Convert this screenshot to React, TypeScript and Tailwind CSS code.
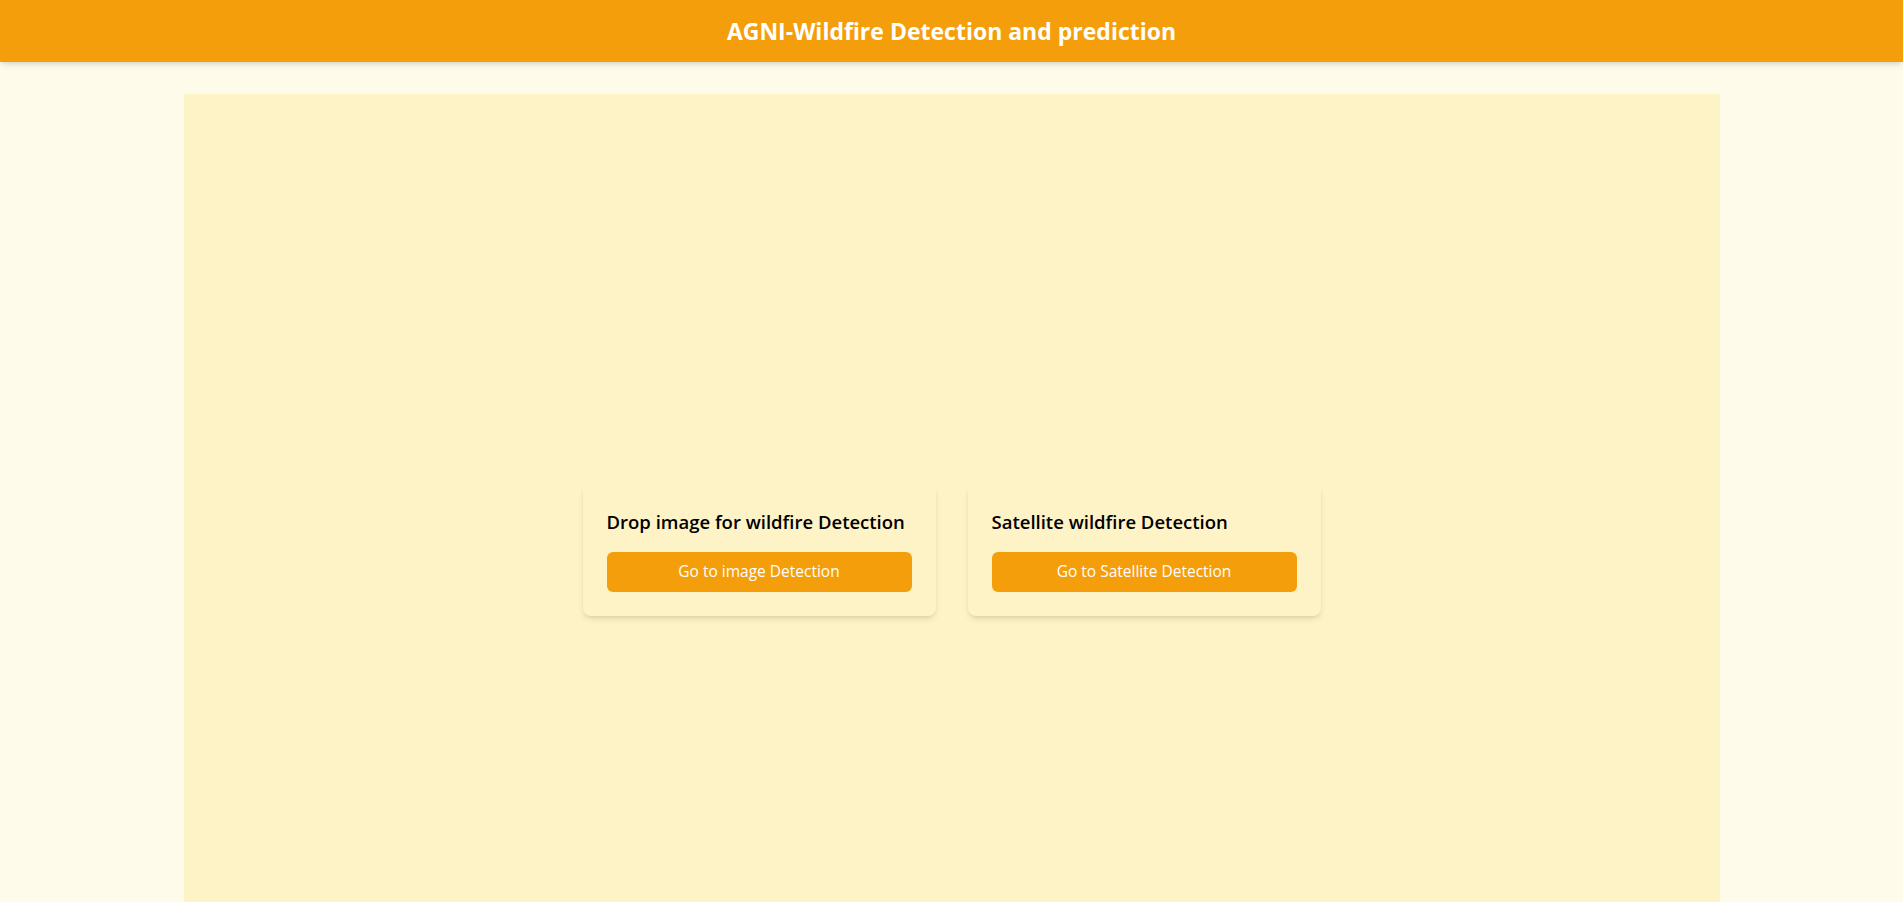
const CARDS = [
  { title: "Drop image for wildfire Detection", action: "Go to image Detection" },
  { title: "Satellite wildfire Detection", action: "Go to Satellite Detection" },
];

export default function App() {
  return (
    <div className="min-h-screen bg-[#fffbeb] font-['Open_Sans',sans-serif] text-black">
      <header className="flex h-[62px] items-center justify-center bg-[#f59e0b] shadow-md">
        <h1 className="text-[23px] font-bold text-white">
          AGNI-Wildfire Detection and prediction
        </h1>
      </header>

      <main className="mx-auto mt-8 flex h-[912px] max-w-[1536px] items-center justify-center gap-8 bg-[#fef3c7]">
        {CARDS.map((c) => (
          <div key={c.title} className="w-[353px] rounded-lg bg-[#fef3c7] p-6 shadow-md">
            <h2 className="mb-4 whitespace-nowrap text-[18.5px] font-semibold leading-7">{c.title}</h2>
            <button className="h-10 w-full rounded-md bg-[#f59e0b] text-[15.5px] text-white">
              {c.action}
            </button>
          </div>
        ))}
      </main>
    </div>
  );
}
